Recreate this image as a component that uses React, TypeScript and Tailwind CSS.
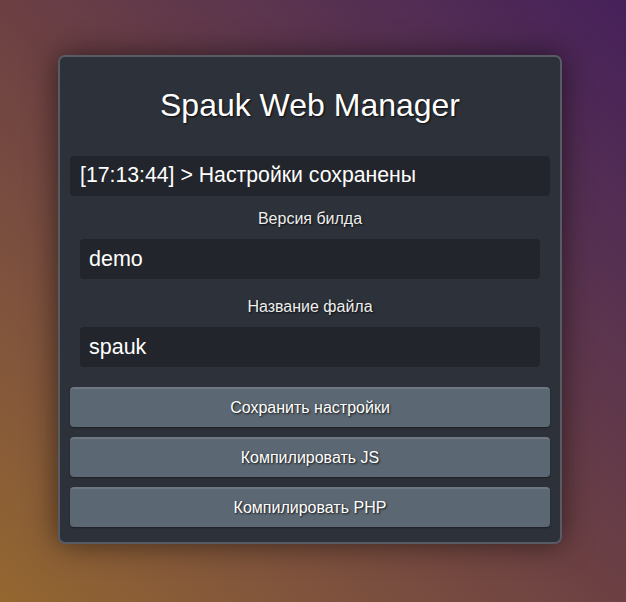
import React, { useState } from "react";

const shadow = "[text-shadow:1px_1px_2px_rgba(0,0,0,0.8)]";

const App: React.FC = () => {
  const [build, setBuild] = useState("demo");
  const [fileName, setFileName] = useState("spauk");

  return (
    <div
      className="min-h-screen w-full bg-gradient-to-tr from-[#94672f] via-[#6c4043] to-[#46205a] flex items-center justify-center pr-[6px]"
      style={{ fontFamily: '"Liberation Sans", Arial, sans-serif' }}
    >
      <div className="w-[504px] mb-[3px] bg-[#2d323a] border-2 border-[#575c64] rounded-[7px] shadow-[0_0_30px_rgba(0,0,0,0.55)] px-[10px] pt-[30px] pb-[15px] text-white">
        <h1 className={`text-[32px] leading-[37px] text-center ${shadow}`}>
          Spauk Web Manager
        </h1>

        <div className="mt-[32px] h-[40px] bg-[#22252b] rounded-[4px] px-[10px] flex items-center text-[21.25px]">
          [17:13:44] &gt; Настройки сохранены
        </div>

        <div className="px-[10px]">
          <label className={`block mt-[14px] text-center text-[16px] leading-[18px] text-[#eeeeee] ${shadow}`}>
            Версия билда
          </label>
          <input
            value={build}
            onChange={(e) => setBuild(e.target.value)}
            className="mt-[11px] block w-full h-[40px] bg-[#22252b] rounded-[4px] px-[9px] text-[21.5px] text-white outline-none"
          />

          <label className={`block mt-[19px] text-center text-[16px] leading-[18px] text-[#eeeeee] ${shadow}`}>
            Название файла
          </label>
          <input
            value={fileName}
            onChange={(e) => setFileName(e.target.value)}
            className="mt-[11px] block w-full h-[40px] bg-[#22252b] rounded-[4px] px-[9px] text-[21.5px] text-white outline-none"
          />
        </div>

        <div className="mt-[20px] flex flex-col gap-[10px]">
          {["Сохранить настройки", "Компилировать JS", "Компилировать PHP"].map((t) => (
            <button
              key={t}
              className={`h-[40px] w-full bg-[#5b6772] border-t-2 border-[#6e7882] rounded-[4px] shadow-[0_1px_2px_rgba(0,0,0,0.4)] text-[16px] text-white ${shadow}`}
            >
              {t}
            </button>
          ))}
        </div>
      </div>
    </div>
  );
};

export default App;
